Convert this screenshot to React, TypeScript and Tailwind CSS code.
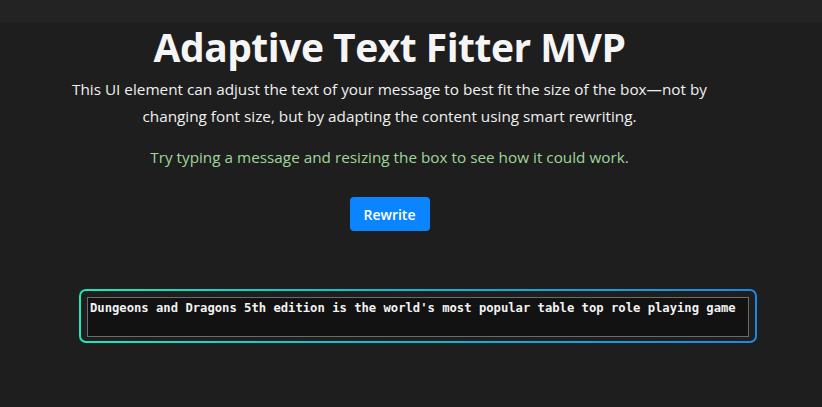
export default function App() {
  return (
    <div className="min-h-[407px] w-[822px] bg-[#1e1e1e] font-['Open_Sans',sans-serif] text-white overflow-hidden">
      {/* top strip */}
      <div className="h-[22px] bg-[#232323]" />

      <div className="w-[779px] flex flex-col items-center text-center">
        <h1 className="mt-[1px] text-[39px] leading-[48px] font-bold tracking-[-0.5px] text-[#f5f5f5]">
          Adaptive Text Fitter MVP
        </h1>
        <p className="mt-[5px] text-[15.3px] leading-[27px] text-[#f0f0f0]">
          This UI element can adjust the text of your message to best fit the size of the box—not by
          <br />
          changing font size, but by adapting the content using smart rewriting.
        </p>
        <p className="mt-[14px] text-[15.3px] leading-[27px] text-[#9ed69a]">
          Try typing a message and resizing the box to see how it could work.
        </p>
        <button className="mt-[26px] w-[80px] h-[34px] rounded-[4px] bg-[#0a84ff] text-[14px] font-semibold text-white">
          Rewrite
        </button>
      </div>

      <div className="mt-[58px] ml-[79px] w-[678px] rounded-[7px] bg-gradient-to-r from-[#1de9b6] to-[#1e88e5] p-[2px]">
        <div className="rounded-[5px] bg-[#1e1e1e] px-[6px] pt-[6px] pb-[4px]">
          <textarea
            className="block h-[40px] w-full resize-none border border-[#6b6b6b] bg-[#121212] px-[2px] pt-[2px] font-['DejaVu_Sans_Mono',monospace] text-[12.2px] font-bold leading-[16px] text-[#f2f2f2] outline-none"
            defaultValue="Dungeons and Dragons 5th edition is the world's most popular table top role playing game"
          />
        </div>
      </div>
    </div>
  );
}
